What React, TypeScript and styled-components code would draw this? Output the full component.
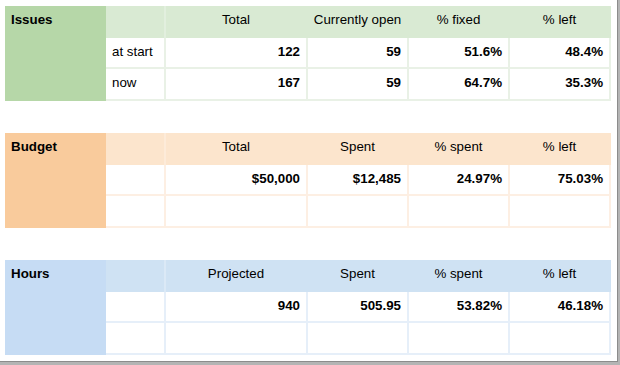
import styled, { createGlobalStyle } from "styled-components";

const GlobalStyle = createGlobalStyle`
  html, body {
    margin: 0;
    padding: 0;
    background: #ffffff;
  }
  body {
    font-family: "Liberation Sans", Arial, sans-serif;
  }
`;

// colour set for one block of the sheet
interface Tone {
  label: string;
  head: string;
  line: string;
}

const green: Tone = { label: "#b6d7a8", head: "#d9ead3", line: "#e9f1e6" };
const orange: Tone = { label: "#f9cb9c", head: "#fce5cd", line: "#fdefe3" };
const blue: Tone = { label: "#c6dcf4", head: "#cfe2f3", line: "#e6eff9" };

const Frame = styled.div`
  width: 620px;
  height: 365px;
  background: #b4b4b4;
  overflow: hidden;
`;

const Sheet = styled.div`
  width: 618px;
  height: 362px;
  background: #ffffff;
  border-right: 1px solid #8c8c8c;
  border-bottom: 1px solid #8c8c8c;
  padding: 6px 0 0 5px;
  box-sizing: border-box;
  display: flex;
  flex-direction: column;
  gap: 32px;
`;

const Table = styled.div`
  display: grid;
  grid-template-columns: 101px 60px 142px 101px 101px 101px;
  grid-template-rows: 32px 31px 32px;
  width: 606px;
  font-size: 13.33px;
  line-height: 16px;
  color: #000;
`;

const Label = styled.div<{ $tone: Tone }>`
  grid-row: span 3;
  background: ${(p) => p.$tone.label};
  font-weight: bold;
  padding: 6px 6px 0;
`;

const Head = styled.div<{ $tone: Tone; $first?: boolean }>`
  background: ${(p) => p.$tone.head};
  text-align: center;
  padding-top: 6px;
  box-sizing: border-box;
  border-right: 2px solid
    ${(p) => (p.$first ? "rgba(255,255,255,0.25)" : "transparent")};
`;

const Cell = styled.div<{ $tone: Tone; $num?: boolean }>`
  background: #ffffff;
  box-sizing: border-box;
  padding: 6px 6px 0;
  border-right: 2px solid ${(p) => p.$tone.line};
  border-bottom: 2px solid ${(p) => p.$tone.line};
  text-align: ${(p) => (p.$num ? "right" : "left")};
  font-weight: ${(p) => (p.$num ? "bold" : "normal")};
  white-space: nowrap;
`;

interface Block {
  title: string;
  tone: Tone;
  heads: string[];
  rows: string[][];
}

const blocks: Block[] = [
  {
    title: "Issues",
    tone: green,
    heads: ["Total", "Currently open", "% fixed", "% left"],
    rows: [
      ["at start", "122", "59", "51.6%", "48.4%"],
      ["now", "167", "59", "64.7%", "35.3%"],
    ],
  },
  {
    title: "Budget",
    tone: orange,
    heads: ["Total", "Spent", "% spent", "% left"],
    rows: [
      ["", "$50,000", "$12,485", "24.97%", "75.03%"],
      ["", "", "", "", ""],
    ],
  },
  {
    title: "Hours",
    tone: blue,
    heads: ["Projected", "Spent", "% spent", "% left"],
    rows: [
      ["", "940", "505.95", "53.82%", "46.18%"],
      ["", "", "", "", ""],
    ],
  },
];

function App() {
  return (
    <Frame>
      <GlobalStyle />
      <Sheet>
        {blocks.map((b) => (
          <Table key={b.title}>
            <Label $tone={b.tone}>{b.title}</Label>
            <Head $tone={b.tone} $first />
            {b.heads.map((h) => (
              <Head key={h} $tone={b.tone}>
                {h}
              </Head>
            ))}
            {b.rows.map((r, i) =>
              r.map((v, j) => (
                <Cell key={`${i}-${j}`} $tone={b.tone} $num={j > 0}>
                  {v}
                </Cell>
              ))
            )}
          </Table>
        ))}
      </Sheet>
    </Frame>
  );
}

export default App;
